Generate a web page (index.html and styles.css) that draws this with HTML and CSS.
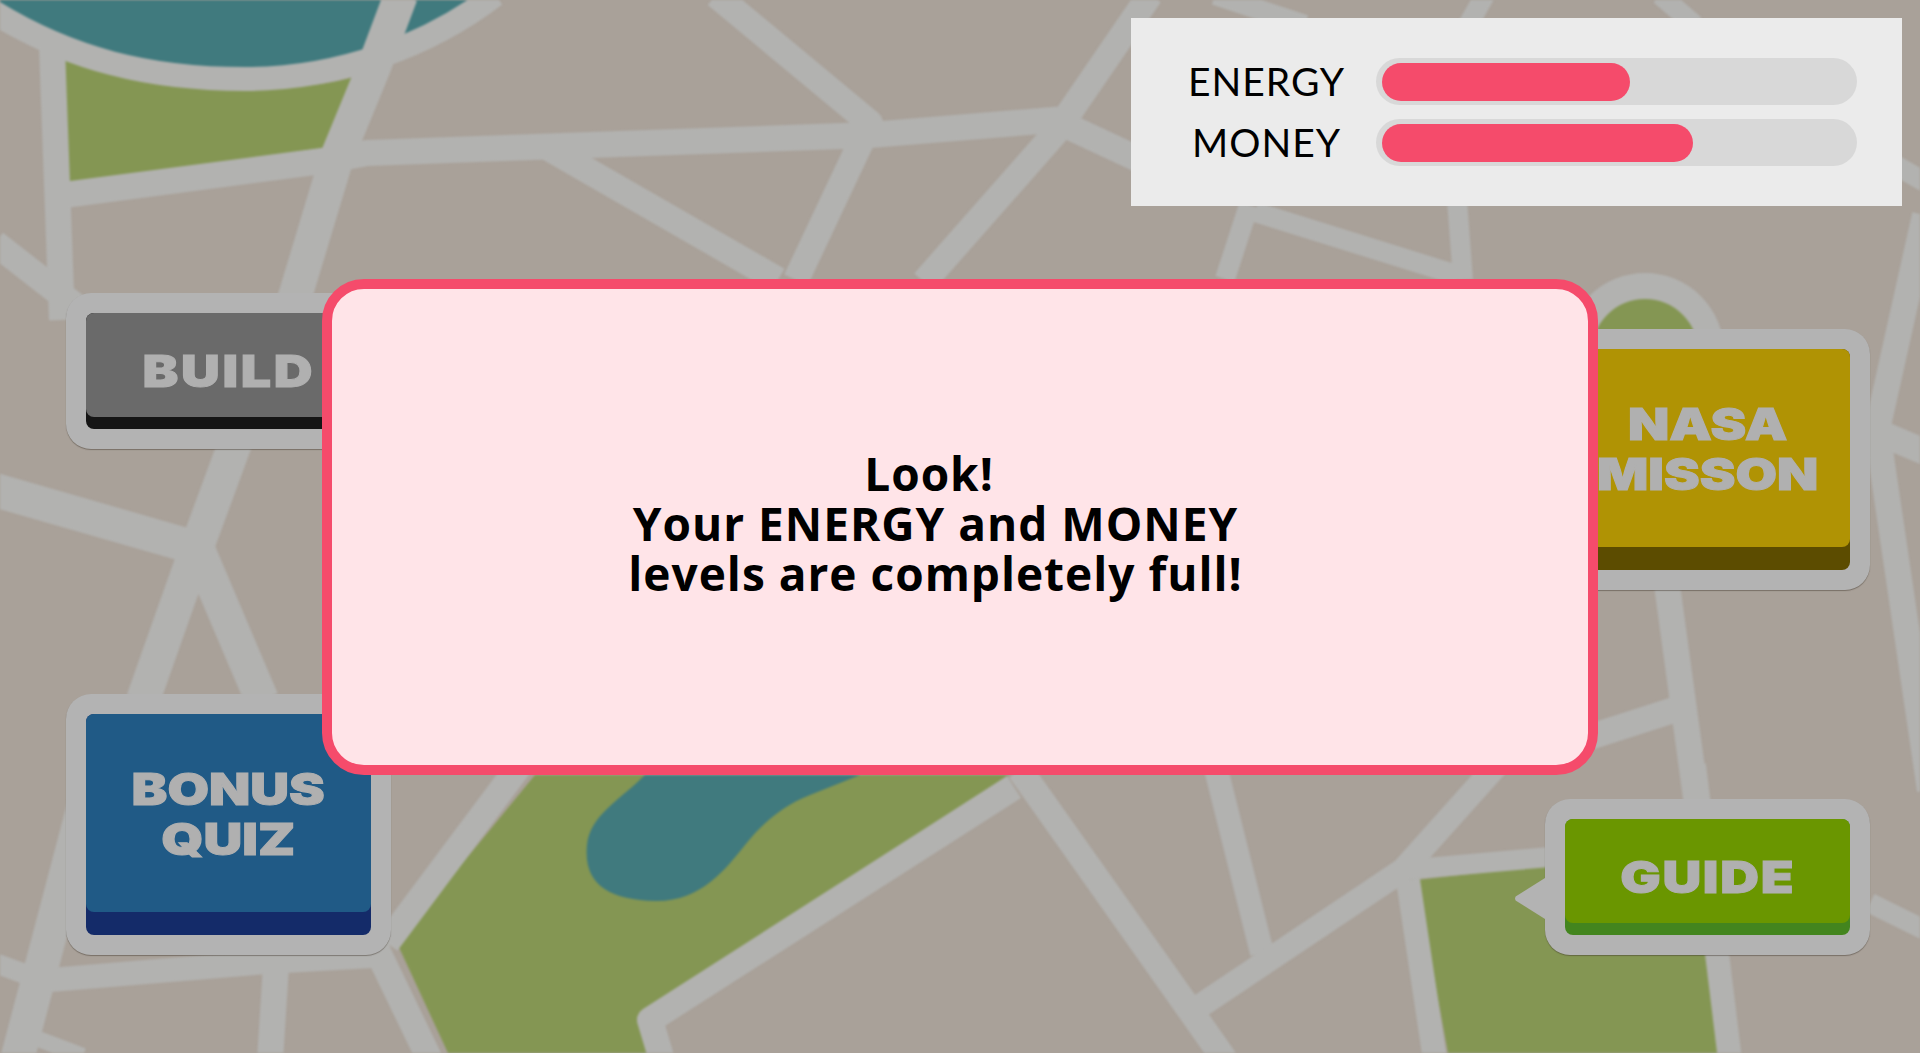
FILE: index.html
```html
<!DOCTYPE html>
<html lang="en">
<head>
<meta charset="utf-8">
<title>City map</title>
<link rel="stylesheet" href="styles.css">
</head>
<body>
<main class="stage">
  <svg class="map" viewBox="0 0 1920 1053" aria-hidden="true">
    <path class="water" d="M-10,10 C70,60 150,79 245,79 C340,79 430,45 495,-5 L495,-10 L-10,-10 Z"/>
    <path class="park" d="M61,57 C130,85 180,89 233,89 C290,89 325,85 354,77 L331,147 L66,185 Z"/>
    <path class="park" d="M397,943 L535,775 L1009,775 L637,1017 L652,1053 L448,1053 Z"/>
    <path class="park" d="M1416,880 L1550,865 L1700,865 L1719,1053 L1448,1053 Z"/>
    <circle class="park ring" cx="1645" cy="352" r="66"/>
    <path class="water" d="M645,775 C620,800 590,815 587,845 C583,885 610,900 655,901 C700,902 725,870 745,845 C765,820 785,805 810,795 L860,775 Z"/>
    <g class="roads">
      <path class="w20" d="M-10,10 C70,60 150,79 245,79 C340,79 430,45 495,-5"/>
      <path class="w30" d="M401,-5 L374,67 L337,157 L294,300"/>
      <path class="w22" d="M52,47 L62,320"/>
      <path class="w22" d="M64,195 L330,160 L367,153 L870,135 L1065,119 L1150,-5"/>
      <path class="w22" d="M716,-5 L870,123 L796,280"/>
      <path class="w22" d="M545,146 L778,280"/>
      <path class="w22" d="M1065,122 L924,282"/>
      <path class="w22" d="M1065,125 L1140,160"/>
      <path class="w22" d="M-5,243 L100,325"/>
      <path class="w16" d="M1249,205 L1225,279"/>
      <path class="w16" d="M1255,212 L1457,275"/>
      <path class="w16" d="M1457,200 L1463,280"/>
      <path class="w16" d="M1215,-5 L1305,25"/>
      <path class="w16" d="M1485,-5 L1468,25"/>
      <path class="w16" d="M1660,-5 L1695,25"/>
      <path class="w16" d="M1895,165 L1925,182"/>
      <path class="w22" d="M1925,215 L1877,430 L1930,790"/>
      <path class="w22" d="M1880,433 L1925,452"/>
      <path class="w22" d="M1667,585 L1697,805"/>
      <path class="w22" d="M1590,737 L1680,708"/>
      <path class="w30" d="M-5,490 L193,547"/>
      <path class="w30" d="M240,430 L197,547 L143,700"/>
      <path class="w30" d="M197,547 L262,700"/>
      <path class="w16" d="M-5,963 L33,977"/>
      <path class="w30" d="M100,745 L17,1060"/>
      <path class="w20" d="M50,980 L267,962 L390,955"/>
      <path class="w22" d="M277,950 L270,1060"/>
      <path class="w22" d="M377,950 L430,1060"/>
      <path class="w12" d="M33,1037 L83,1056"/>
      <path class="w22" d="M520,765 L387,943"/>
      <path class="w22" d="M1014,787 L650,1020 L662,1060"/>
      <path class="w22" d="M1020,770 L1192,1013 L1225,1060"/>
      <path class="w20" d="M1215,765 L1262,953"/>
      <path class="w20" d="M1197,1008 L1403,870 L1497,765"/>
      <path class="w16" d="M1403,870 L1550,857"/>
      <path class="w20" d="M1408,880 L1435,1060"/>
      <path class="w20" d="M1694,765 L1730,1060"/>
      <path class="w16" d="M1870,903 L1925,930"/>
    </g>
  </svg>

  <a class="pin pin-build" href="#"><span class="key key-grey"><span class="cap"><span class="word word-build">BUILD</span></span></span></a>
  <a class="pin pin-nasa" href="#"><span class="key key-gold"><span class="cap cap-tall"><span class="word">NASA<br>MISSON</span></span></span></a>
  <a class="pin pin-bonus" href="#"><span class="key key-blue"><span class="cap cap-tall"><span class="word">BONUS<br>QUIZ</span></span></span></a>
  <a class="pin pin-guide" href="#"><span class="key key-green"><span class="cap"><span class="word word-guide">GUIDE</span></span></span></a>

  <section class="hud">
    <div class="stat-label">ENERGY</div>
    <div class="track"><div class="fill" style="width:248px"></div></div>
    <div class="stat-label">MONEY</div>
    <div class="track"><div class="fill" style="width:311px"></div></div>
  </section>

  <div class="overlay">
    <div class="dialog">
      <div class="message">
        <p class="line line-first">Look!</p>
        <p class="line">Your ENERGY and MONEY</p>
        <p class="line">levels are completely full!</p>
      </div>
    </div>
  </div>
</main>
</body>
</html>
```
FILE: styles.css
```css
* { box-sizing: border-box; }
html, body { margin: 0; height: 100%; overflow: hidden; }
.stage {
  position: relative;
  width: 100%;
  height: 100vh;
  background: #a9a199;
  overflow: hidden;
  display: flex;
  flex-direction: column;
  align-items: flex-end;
}
.map { position: absolute; inset: 0; width: 100%; height: 100%; filter: blur(0.8px); }
.water { fill: #407a7e; }
.park { fill: #849653; }
.ring { stroke: #b2b2b0; stroke-width: 26; }
.roads path { fill: none; stroke: #b2b2b0; stroke-linejoin: round; }
.w12 { stroke-width: 16; }
.w16 { stroke-width: 20; }
.w20 { stroke-width: 24; }
.w22 { stroke-width: 26; }
.w30 { stroke-width: 34; }

.hud {
  position: relative;
  margin: 18px 18px 0 0;
  width: 771px;
  height: 188px;
  padding: 40px 45px 0 26px;
  background: #ebebeb;
  display: grid;
  grid-template-columns: 219px 481px;
  grid-auto-rows: 47px;
  row-gap: 14px;
  align-items: center;
}
.stat-label {
  font-family: "Lato", sans-serif;
  font-size: 39px;
  line-height: 47px;
  letter-spacing: 1px;
  color: #000;
  text-align: center;
}
.track {
  height: 47px;
  padding: 5px 6px;
  border-radius: 24px;
  background: #d8d8d8;
}
.fill { height: 38px; border-radius: 19px; background: #f54b6b; }

.pin {
  position: absolute;
  display: block;
  width: 325px;
  padding: 20px;
  border-radius: 25px;
  background: #b3b3b3;
  box-shadow: 0 1px 1px rgba(60, 50, 40, 0.45);
  text-decoration: none;
}
.pin-build { left: 66px; top: 293px; }
.pin-nasa { left: 1545px; top: 329px; }
.pin-bonus { left: 66px; top: 694px; }
.pin-guide { left: 1545px; top: 799px; }
.pin-guide::before {
  content: "";
  position: absolute;
  left: -30px;
  top: 79px;
  width: 30px;
  height: 41px;
  background: #b3b3b3;
  clip-path: polygon(100% 0, 100% 100%, 2% 55%, 0 50%, 2% 45%);
}
.key { display: block; padding-bottom: 12px; border-radius: 8px; }
.key-grey { background: #151515; }
.key-gold { background: #5c4c00; padding-bottom: 23px; }
.key-blue { background: #142b69; padding-bottom: 23px; }
.key-green { background: #43851e; }
.cap {
  display: flex;
  align-items: center;
  justify-content: center;
  height: 104px;
  padding-top: 12px;
  border-radius: 8px;
}
.cap-tall { height: 198px; padding-top: 1px; }
.key-grey .cap { background: #6a6a6a; }
.key-gold .cap { background: #b09304; }
.key-blue .cap { background: #205a86; }
.key-green .cap { background: #6a9600; }
.word {
  display: block;
  font-family: "Inter", sans-serif;
  font-weight: 900;
  font-size: 44px;
  line-height: 50px;
  color: #b0b0b0;
  text-align: center;
  -webkit-text-stroke: 1px #b0b0b0;
  transform: scaleX(1.22);
}
.word-build { letter-spacing: 2.2px; }
.word-guide { letter-spacing: 1.4px; }

.overlay {
  position: absolute;
  inset: 0;
  display: flex;
  align-items: center;
  justify-content: center;
}
.dialog {
  width: 1276px;
  height: 496px;
  padding: 0 49px 8px 0;
  display: flex;
  align-items: center;
  justify-content: center;
  border: 10px solid #f54b6b;
  border-radius: 42px;
  background: #ffe4e8;
}
.message {
  font-family: "Open Sans", sans-serif;
  font-weight: 700;
  font-size: 46px;
  line-height: 50px;
  letter-spacing: 1px;
  color: #000;
  text-align: center;
}
.line { margin: 0; height: 50px; }
.line-first { padding-right: 13px; }
```
